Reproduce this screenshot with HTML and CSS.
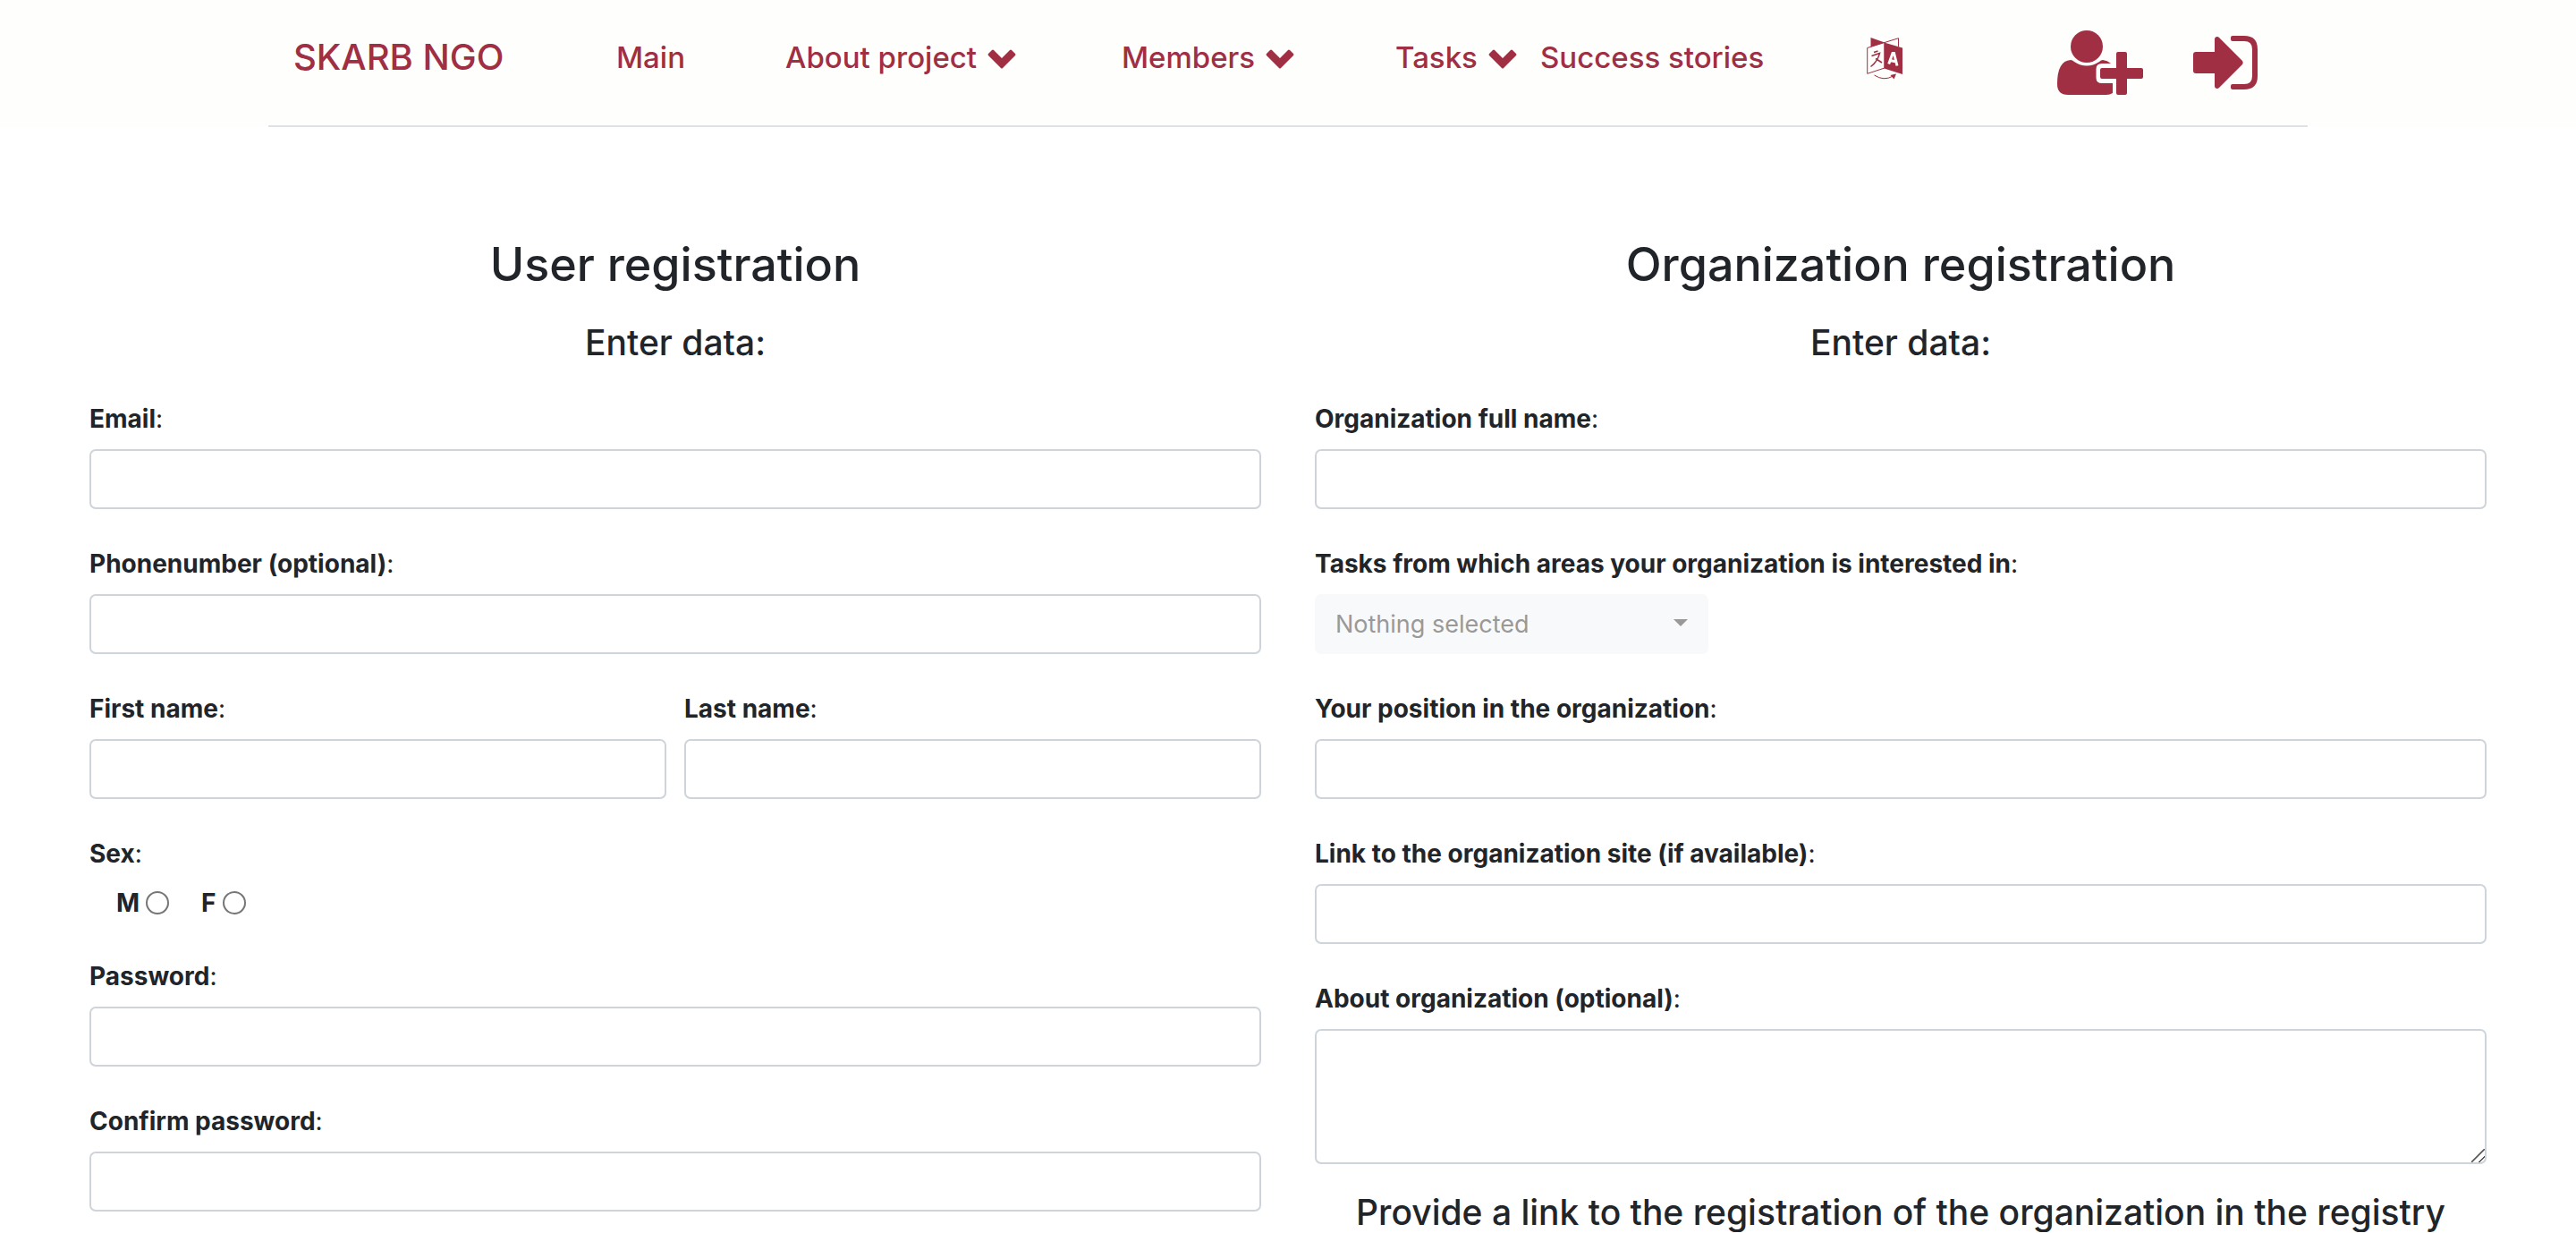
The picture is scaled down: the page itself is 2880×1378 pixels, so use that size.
FILE: index.html
```html
<!DOCTYPE html>
<html lang="en">
<head>
<meta charset="utf-8">
<title>SKARB NGO – Registration</title>
<link rel="stylesheet" href="styles.css">
</head>
<body>
<header class="site-header">
  <nav class="navbar" aria-label="Main navigation">
    <a class="brand" href="#">SKARB NGO</a>
    <a class="nav-link" href="#">Main</a>
    <a class="nav-link" href="#">About project <svg class="chevron" viewBox="0 0 32 22" aria-hidden="true"><path d="M1 5 5 1Q6 0 7 1L16 10 25 1Q26 0 27 1L31 5Q32 6 31 7L17 21Q16 22 15 21L1 7Q0 6 1 5Z"/></svg></a>
    <a class="nav-link" href="#">Members <svg class="chevron" viewBox="0 0 32 22" aria-hidden="true"><path d="M1 5 5 1Q6 0 7 1L16 10 25 1Q26 0 27 1L31 5Q32 6 31 7L17 21Q16 22 15 21L1 7Q0 6 1 5Z"/></svg></a>
    <a class="nav-link" href="#">Tasks <svg class="chevron" viewBox="0 0 32 22" aria-hidden="true"><path d="M1 5 5 1Q6 0 7 1L16 10 25 1Q26 0 27 1L31 5Q32 6 31 7L17 21Q16 22 15 21L1 7Q0 6 1 5Z"/></svg></a>
    <a class="nav-link" href="#">Success stories</a>
    <button class="icon-button" type="button" aria-label="Change language">
      <svg class="icon-translate" viewBox="0 0 40 48" aria-hidden="true">
        <path class="solid" d="M4.500 0 20 5.500 5 10.500 4.500 10Z"/>
        <path class="line" d="M20 5.500 35.500 .7V10M.7 11.500 20 5.500V34L.7 40.300Z"/>
        <path class="solid" d="M19.500 5.500 40 11.500V41L19.500 34.500Z"/>
        <path class="stroke" d="M8 16.500 12.500 15M5.500 20.500 14.500 17.500Q12 27 4.500 32.500M10 23.500 17 28"/>
        <path class="line" d="M8.500 42Q19 49 29.500 43"/>
        <path class="solid" d="M26.500 42 33 40.500 30.500 46.500Z"/>
        <path class="cut" d="M24.700 29.500 29 17.500H30.500L34 31.500M26 25.500 33 27"/>
      </svg>
    </button>
    <a class="icon-link" href="#" aria-label="Register">
      <svg class="icon-user" viewBox="0 0 96 72" aria-hidden="true"><circle cx="33" cy="18" r="18"/><path d="M15 33Q17 33 19 35Q33 44 47 35Q49 33 51 33Q56 33.500 60 37H50Q43.500 37 43.500 43V53Q43.500 59 50 59H62V70Q59 72 55 72H12Q0 72 0 60Q0 34 15 33Z"/><path d="M68 24H76Q78 24 78 26V42H94Q96 42 96 44V52Q96 54 94 54H78V70Q78 72 76 72H68Q66 72 66 70V54H50Q48 54 48 52V44Q48 42 50 42H66V26Q66 24 68 24Z"/></svg>
    </a>
    <a class="icon-link" href="#" aria-label="Sign in">
      <svg class="icon-login" viewBox="0 0 72 60" aria-hidden="true"><path d="M3 18H24V4Q24 1 27 1Q28 1 29 2L55 28Q56.500 30 55 32L29 58Q28 59 27 59Q24 59 24 56V42H3Q0 42 0 39V21Q0 18 3 18ZM44 0H57Q72 0 72 15V45Q72 60 57 60H44Q42 60 42 58V56Q42 54 44 54H57Q66 54 66 45V15Q66 6 57 6H44Q42 6 42 4V2Q42 0 44 0Z"/></svg>
    </a>
  </nav>
</header>
<main class="forms">
  <form class="form">
    <h2 class="form-title">User registration</h2>
    <h4 class="form-subtitle">Enter data:</h4>
    <div class="field"><label class="label" for="email"><b>Email</b>:</label><input class="control" id="email" type="email"></div>
    <div class="field"><label class="label" for="phone"><b>Phonenumber (optional)</b>:</label><input class="control" id="phone" type="tel"></div>
    <div class="field-row">
      <div class="field"><label class="label" for="first"><b>First name</b>:</label><input class="control" id="first" type="text"></div>
      <div class="field"><label class="label" for="last"><b>Last name</b>:</label><input class="control" id="last" type="text"></div>
    </div>
    <fieldset class="field">
      <legend class="label"><b>Sex</b>:</legend>
      <div class="choices">
        <label class="choice" for="male">M <input class="radio" id="male" name="sex" type="radio"></label>
        <label class="choice" for="female">F <input class="radio" id="female" name="sex" type="radio"></label>
      </div>
    </fieldset>
    <div class="field"><label class="label" for="password"><b>Password</b>:</label><input class="control" id="password" type="password"></div>
    <div class="field last"><label class="label" for="confirm"><b>Confirm password</b>:</label><input class="control" id="confirm" type="password"></div>
  </form>
  <form class="form">
    <h2 class="form-title">Organization registration</h2>
    <h4 class="form-subtitle">Enter data:</h4>
    <div class="field"><label class="label" for="org"><b>Organization full name</b>:</label><input class="control" id="org" type="text"></div>
    <div class="field"><label class="label" for="areas"><b>Tasks from which areas your organization is interested in</b>:</label>
      <div class="select-wrap"><select class="select" id="areas"><option>Nothing selected</option></select></div></div>
    <div class="field"><label class="label" for="position"><b>Your position in the organization</b>:</label><input class="control" id="position" type="text"></div>
    <div class="field"><label class="label" for="site"><b>Link to the organization site (if available)</b>:</label><input class="control" id="site" type="url"></div>
    <div class="field about"><label class="label" for="about"><b>About organization (optional)</b>:</label><textarea class="control textarea" id="about"></textarea></div>
    <h4 class="form-note">Provide a link to the registration of the organization in the registry</h4>
  </form>
</main>
</body>
</html>
```
FILE: styles.css
```css
* { box-sizing: border-box; }

body {
  margin: 0;
  background: #fff;
  color: #212529;
  font: 400 28px/42px Inter, "Liberation Sans", sans-serif;
}

.site-header {
  padding: 0 300px;
  background: #fefefc;
  color: #a02f44;
}

.navbar {
  display: grid;
  grid-template-columns: 361fr 189fr 376fr 306fr 162fr 365fr 213fr 152fr 128fr;
  height: 142px;
  padding-left: 28px;
  border-bottom: 2px solid #dee2e6;
}

.brand,
.nav-link {
  color: inherit;
  font-size: 33px;
  font-weight: 500;
  line-height: 52px;
  padding-top: 38px;
  white-space: nowrap;
  text-decoration: none;
}

.brand { font-size: 40px; }

svg { display: block; fill: currentColor; }

.chevron {
  display: inline-block;
  width: 32px;
  height: 22px;
  margin-left: 3px;
  vertical-align: -1px;
}

.icon-button {
  justify-self: start;
  align-self: start;
  margin: 42px 0 0;
  padding: 0;
  border: 0;
  background: none;
  color: inherit;
}

.icon-link { color: inherit; padding-top: 34px; }

.icon-translate { width: 40px; height: 48px; }
.icon-translate .line { fill: none; stroke: currentColor; stroke-width: 1px; }
.icon-translate .stroke { fill: none; stroke: currentColor; stroke-width: 1.5px; }
.icon-translate .cut { fill: none; stroke: #fefefc; stroke-width: 3px; }
.icon-user { width: 96px; height: 72px; }
.icon-login { width: 72px; height: 60px; margin-top: 6px; }

.forms {
  display: grid;
  grid-template-columns: 1fr 1fr;
  gap: 60px;
  padding: 120px 100px 0;
}

.form-title,
.form-subtitle,
.form-note {
  margin: 0;
  font-weight: 500;
  text-align: center;
}

.form-title { font-size: 52px; line-height: 68px; margin-bottom: 28px; }
.form-subtitle { font-size: 39px; line-height: 50px; margin-bottom: 39px; }
.form-note { font-size: 39px; line-height: 44px; }

.field { margin: 0 0 40px; padding: 0; border: 0; min-width: 0; }
.last { margin-bottom: 0; }

.field-row {
  display: grid;
  grid-template-columns: 1fr 1fr;
  gap: 20px;
}

.label {
  display: block;
  margin-bottom: 13px;
  padding: 0;
}

b { font-weight: 700; }

.control {
  display: block;
  width: 100%;
  height: 67px;
  padding: 10px 21px;
  border: 2px solid #ced4da;
  border-radius: 7px;
  background: #fff;
  color: #495057;
  font: inherit;
}

.textarea { height: 151px; resize: vertical; }

.textarea::-webkit-resizer {
  background: linear-gradient(135deg, transparent 46%, #555 47% 53%, transparent 54% 75%, #555 76% 82%, transparent 83%);
}

.about { margin-bottom: 32px; }

.select-wrap { position: relative; width: 440px; }

.select-wrap::after {
  content: "";
  position: absolute;
  right: 23px;
  top: 28px;
  border: 8px solid transparent;
  border-top-color: #999;
  border-bottom: 0;
  pointer-events: none;
}

.select {
  display: block;
  appearance: none;
  width: 100%;
  height: 67px;
  padding: 0 23px;
  border: 0;
  border-radius: 7px;
  background: #f8f9fa;
  color: #999;
  font: inherit;
  font-size: 27px;
}

.choices { display: flex; gap: 36px; padding-left: 30px; }
.choice { display: flex; align-items: center; gap: 7px; font-weight: 700; }

.radio {
  appearance: none;
  width: 26px;
  height: 26px;
  margin: 0;
  border: 2px solid #767676;
  border-radius: 50%;
}

.radio:checked { border-width: 8px; }
```
